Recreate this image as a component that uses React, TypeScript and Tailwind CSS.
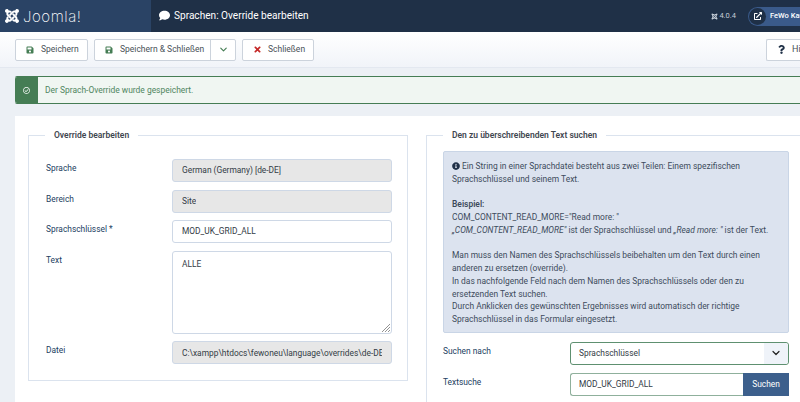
import React from "react";
import { ChevronDown } from "lucide-react";
import { FaJoomla, FaSave, FaTimes, FaRegCheckCircle, FaComment, FaExternalLinkAlt, FaInfoCircle, FaQuestion } from "react-icons/fa";

function Btn({ icon, children, className = "" }: { icon: React.ReactNode; children: React.ReactNode; className?: string }) {
  return (
    <div className={"flex h-[22px] items-center whitespace-nowrap rounded-[2px] border border-[#ccd3dc] bg-white text-[#495057] " + className}>
      <span className="flex w-[25px] shrink-0 justify-center pl-[3px]">{icon}</span>
      <span>{children}</span>
    </div>
  );
}

function Row({ label, children }: { label: string; children: React.ReactNode }) {
  return (
    <div className="flex items-start">
      <div className="w-[126px] shrink-0 text-[8.4px] leading-[18px] text-[#22405f]">{label}</div>
      {children}
    </div>
  );
}

function Field({ value, disabled }: { value: string; disabled?: boolean }) {
  return (
    <div
      className={
        "flex h-[23px] w-[220px] items-center overflow-hidden whitespace-nowrap rounded-[3px] border border-[#ced8e6] px-[9px] text-[8.4px] text-[#333c46] " +
        (disabled ? "bg-[#e7e7e7]" : "bg-white")
      }
    >
      <span className="block overflow-hidden">{value}</span>
    </div>
  );
}

export default function App() {
  return (
    <div className="h-[402px] w-[800px] overflow-hidden bg-[#ecf0f5] font-['Roboto',sans-serif] text-[8.5px]">
      <header className="flex h-[32px] items-center bg-[#1f3047] text-white">
        <div className="flex h-full w-[151px] items-center gap-[3px] bg-[#2a4365] pl-[4px]">
          <FaJoomla size={16} />
          <span className="font-['Inter',sans-serif] text-[15px] font-extralight leading-none tracking-[0.55px]">Joomla!</span>
        </div>
        <div className="flex items-center gap-[4px] pl-[8px]">
          <FaComment size={11} />
          <span className="text-[10.1px]">Sprachen: Override bearbeiten</span>
        </div>
        <div className="ml-auto flex items-center gap-[12px]">
          <span className="flex items-center gap-[1px] text-[7.5px] text-[#c4ccd6]"><FaJoomla size={7} /> 4.0.4</span>
          <div className="flex h-[19px] w-[52px] items-center gap-[4px] overflow-hidden rounded-l-full bg-[#3a5a8a]">
            <span className="ml-[1px] flex h-[17px] w-[17px] shrink-0 items-center justify-center rounded-full bg-[#1f3047]">
              <FaExternalLinkAlt size={8} />
            </span>
            <span className="whitespace-nowrap text-[7.5px] font-medium">FeWo Kauf</span>
          </div>
        </div>
      </header>
      <div className="flex h-[36px] items-center border-b border-[#e3e8f0] bg-gradient-to-b from-white to-[#f1f4f9] pl-[15px]">
        <Btn className="w-[73px]" icon={<FaSave size={8} color="#457d54" />}>Speichern</Btn>
        <div className="ml-[6px] flex h-[22px] w-[142px] items-center whitespace-nowrap rounded-[2px] border border-[#ccd3dc] bg-white text-[#495057]">
          <span className="flex w-[25px] shrink-0 justify-center pl-[3px]"><FaSave size={8} color="#457d54" /></span>
          <span>Speichern &amp; Schließen</span>
          <span className="ml-auto flex h-full w-[25px] items-center justify-center border-l border-[#ccd3dc]"><ChevronDown size={11} color="#457d54" strokeWidth={2.5} /></span>
        </div>
        <Btn className="ml-[6px] w-[72px]" icon={<FaTimes size={9} color="#c52827" />}>Schließen</Btn>
        <div className="ml-auto flex h-[22px] w-[34px] items-center rounded-l-[2px] border border-r-0 border-[#ccd3dc] bg-white pl-[10px] text-[#495057]">
          <span className="w-[15px] shrink-0"><FaQuestion size={9} color="#1f3047" /></span>
          <span className="text-[9px]">Hi</span>
        </div>
      </div>
      <div className="pl-[15px]">
        <div className="mt-[8px] flex h-[28px] items-stretch rounded-l-[2px] border-y border-[#457d54] bg-[#f0f6f2]">
          <div className="flex w-[23px] items-center justify-center rounded-l-[2px] bg-[#457d54]">
            <FaRegCheckCircle size={7} color="#fff" />
          </div>
          <div className="flex items-center pl-[7px] text-[8.45px] text-[#4f8560]">Der Sprach-Override wurde gespeichert.</div>
        </div>
        <div className="mt-[12px] flex h-[300px] gap-[18px] bg-white pl-[13px] pt-[14px]">
          <fieldset className="h-[251px] w-[380px] shrink-0 border border-[#dbe3ee] pl-[17px] pr-[15px]">
            <legend className="-ml-[1px] px-[9px] text-[8.5px] font-semibold leading-[10px] text-[#3f4750]">Override bearbeiten</legend>
            <div className="mt-[19px] flex flex-col gap-[7.6px]">
              <Row label="Sprache"><Field value="German (Germany) [de-DE]" disabled /></Row>
              <Row label="Bereich"><Field value="Site" disabled /></Row>
              <Row label="Sprachschlüssel *"><Field value="MOD_UK_GRID_ALL" /></Row>
              <Row label="Text">
                <div className="relative h-[83px] w-[220px] rounded-[3px] border border-[#ced8e6] bg-white px-[9px] pt-[6px] text-[8.4px] text-[#333c46]">
                  ALLE
                  <svg className="absolute bottom-[1px] right-[1px]" width="8" height="8" viewBox="0 0 8 8" stroke="#777" strokeWidth="0.8">
                    <path d="M8 0 L0 8 M8 3 L3 8 M8 6 L6 8" />
                  </svg>
                </div>
              </Row>
              <Row label="Datei"><Field value="C:\xampp\htdocs\fewoneu\language\overrides\de-DE" disabled /></Row>
            </div>
          </fieldset>
          <fieldset className="h-[300px] flex-1 border-l border-t border-[#dbe3ee] pl-[16px] pr-[11px]">
            <legend className="px-[9px] text-[8.5px] font-semibold leading-[10px] text-[#3f4750]">Den zu überschreibenden Text suchen</legend>
            <div className="mt-[11px] w-[346px] rounded-[2px] border border-[#c9d5e6] bg-[#dce3ef] px-[8px] pb-[6.5px] pt-[8px] text-[8.45px] leading-[12.75px] text-[#3d4b5c]">
              <p><FaInfoCircle size={8} color="#1f3047" className="mr-[2px] inline align-[-1px]" />Ein String in einer Sprachdatei besteht aus zwei Teilen: Einem spezifischen Sprachschlüssel und seinem Text.</p>
              <br />
              <p className="font-semibold">Beispiel:</p>
              <p>COM_CONTENT_READ_MORE="Read more: "</p>
              <p className="whitespace-nowrap"><i>„COM_CONTENT_READ_MORE"</i> ist der Sprachschlüssel und <i>„Read more: "</i> ist der Text.</p>
              <br />
              <p>Man muss den Namen des Sprachschlüssels beibehalten um den Text durch einen anderen zu ersetzen (override).</p>
              <p>In das nachfolgende Feld nach dem Namen des Sprachschlüssels oder den zu ersetzenden Text suchen.</p>
              <p>Durch Anklicken des gewünschten Ergebnisses wird automatisch der richtige Sprachschlüssel in das Formular eingesetzt.</p>
            </div>
            <div className="mt-[8.5px] flex w-[346px] items-start">
              <div className="w-[127px] text-[8.4px] leading-[18px] text-[#22405f]">Suchen nach</div>
              <div className="flex h-[23px] flex-1 items-center rounded-[3px] border border-[#5e9070] bg-white pl-[8px] text-[8.4px] text-[#333c46]">
                Sprachschlüssel
                <span className="ml-auto flex h-full w-[24px] items-center justify-center rounded-r-[3px] bg-[#eff3f9]"><ChevronDown size={12} color="#222" strokeWidth={2.4} /></span>
              </div>
            </div>
            <div className="mt-[8px] flex w-[346px] items-start">
              <div className="w-[127px] text-[8.4px] leading-[18px] text-[#22405f]">Textsuche</div>
              <div className="flex h-[23px] flex-1 items-stretch">
                <div className="flex flex-1 items-center rounded-l-[3px] border border-r-0 border-[#8fb09c] bg-white pl-[8px] text-[8.4px] text-[#333c46]">MOD_UK_GRID_ALL</div>
                <div className="flex w-[46px] items-center justify-center bg-[#3c5f8c] text-[8.4px] text-white">Suchen</div>
              </div>
            </div>
          </fieldset>
        </div>
      </div>
    </div>
  );
}
